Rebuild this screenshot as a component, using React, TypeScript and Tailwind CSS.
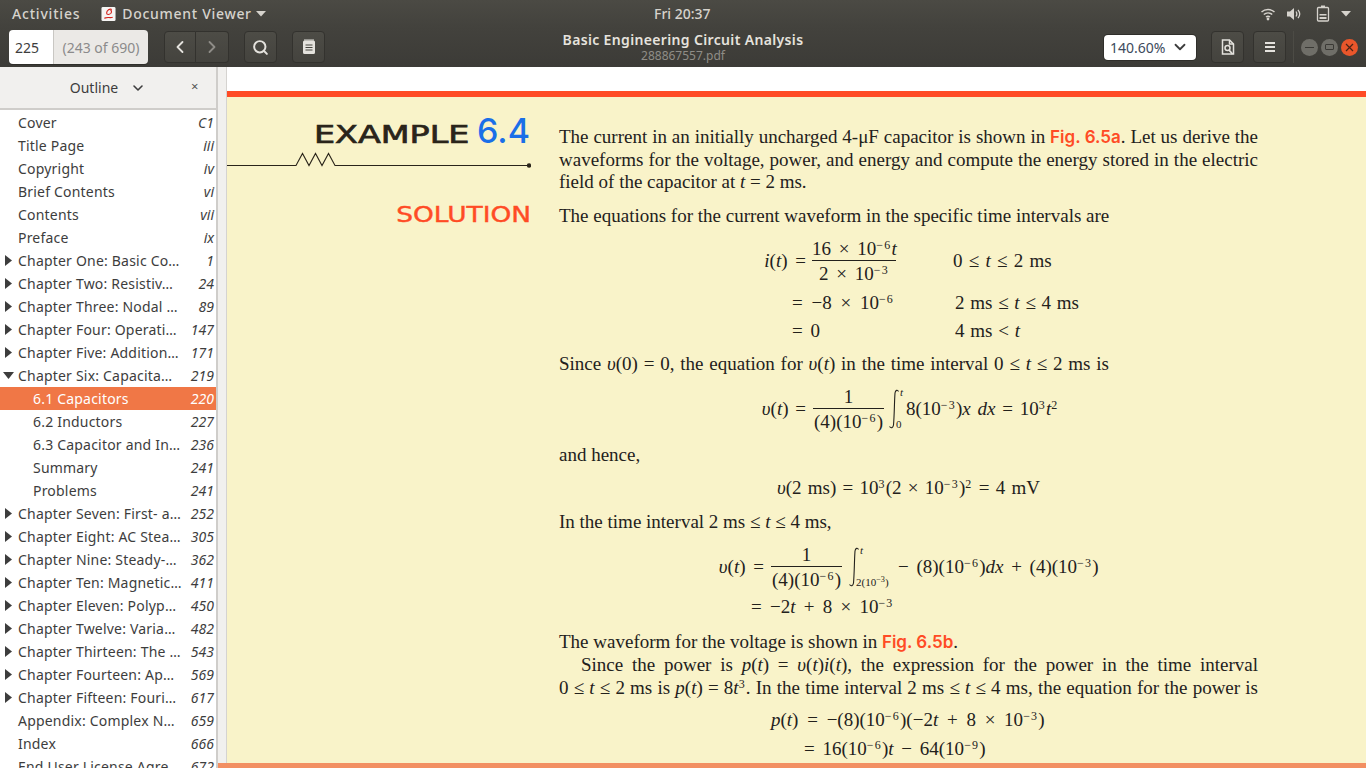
import { ChevronDown, ChevronLeft, ChevronRight, Search } from "lucide-react";
import type { ReactNode } from "react";

type OutlineEntry = {
  title: string;
  page: string;
  arrow?: "right" | "down";
  child?: boolean;
  active?: boolean;
};

const OUTLINE: OutlineEntry[] = [
  { title: "Cover", page: "C1" },
  { title: "Title Page", page: "iii" },
  { title: "Copyright", page: "iv" },
  { title: "Brief Contents", page: "vi" },
  { title: "Contents", page: "vii" },
  { title: "Preface", page: "ix" },
  { title: "Chapter One: Basic Co…", page: "1", arrow: "right" },
  { title: "Chapter Two: Resistiv…", page: "24", arrow: "right" },
  { title: "Chapter Three: Nodal …", page: "89", arrow: "right" },
  { title: "Chapter Four: Operati…", page: "147", arrow: "right" },
  { title: "Chapter Five: Addition…", page: "171", arrow: "right" },
  { title: "Chapter Six: Capacita…", page: "219", arrow: "down" },
  { title: "6.1 Capacitors", page: "220", child: true, active: true },
  { title: "6.2 Inductors", page: "227", child: true },
  { title: "6.3 Capacitor and In…", page: "236", child: true },
  { title: "Summary", page: "241", child: true },
  { title: "Problems", page: "241", child: true },
  { title: "Chapter Seven: First- a…", page: "252", arrow: "right" },
  { title: "Chapter Eight: AC Stea…", page: "305", arrow: "right" },
  { title: "Chapter Nine: Steady-…", page: "362", arrow: "right" },
  { title: "Chapter Ten: Magnetic…", page: "411", arrow: "right" },
  { title: "Chapter Eleven: Polyp…", page: "450", arrow: "right" },
  { title: "Chapter Twelve: Varia…", page: "482", arrow: "right" },
  { title: "Chapter Thirteen: The …", page: "543", arrow: "right" },
  { title: "Chapter Fourteen: Ap…", page: "569", arrow: "right" },
  { title: "Chapter Fifteen: Fouri…", page: "617", arrow: "right" },
  { title: "Appendix: Complex N…", page: "659" },
  { title: "Index", page: "666" },
  { title: "End User License Agre…", page: "672" },
];

function ToolButton({ children, className = "" }: { children: ReactNode; className?: string }) {
  return (
    <div
      className={`flex h-[32px] items-center justify-center rounded-[4px] border border-[#33322e] bg-gradient-to-b from-[#4d4c46] to-[#44433e] ${className}`}
    >
      {children}
    </div>
  );
}

function TopBar() {
  return (
    <div className="relative flex h-[27px] items-center bg-gradient-to-b from-[#4b4a44] to-[#43423d] text-[14px] font-medium text-[#d6d3cd]">
      <span className="ml-[12px] tracking-[0.8px]">Activities</span>
      <svg className="ml-[21px]" width="15" height="16" viewBox="0 0 16 16">
        <rect x="0.5" y="0.5" width="15" height="15" rx="1.5" fill="#f6f5f3" />
        <path d="M11.5 3.2c-2-1.4-5.5 1-5.5 3.8 0 2 3 2 4.6.2.9-1.2.7-3-.5-3.6M3.5 12.5c2-.5 3-1 4.5-.8 1.500.2 3 .4 4.500-.2" fill="none" stroke="#d5231c" strokeWidth="1.200" />
      </svg>
      <span className="ml-[6px] tracking-[0.7px]">Document Viewer</span>
      <svg className="ml-[4px]" width="10" height="6" viewBox="0 0 10 6">
        <path d="M0 0h10L5 5.500z" fill="#d6d3cd" />
      </svg>
      <span className="absolute left-[654px] top-[4px] text-[14px] leading-[19px]">Fri 20:37</span>
      <div className="ml-auto mr-[15px] flex items-center">
        <svg width="16" height="16" viewBox="0 0 16 16" fill="none" stroke="#d6d3cd" strokeWidth="1.500">
          <path d="M1.500 6c3.700-3.300 9.300-3.300 13 0M3.800 8.500c2.400-2 6-2 8.400 0M6 11c1.200-.9 2.800-.9 4 0" />
          <circle cx="8" cy="13" r="1.400" fill="#d6d3cd" stroke="none" />
        </svg>
        <svg className="ml-[10px]" width="16" height="16" viewBox="0 0 16 16" fill="none">
          <path d="M1 5.500h3L8 2v12l-4-3.500H1z" fill="#d6d3cd" />
          <path d="M10 5.500c1 1.500 1 3.500 0 5M12 3.800c2 2.500 2 6 0 8.400" stroke="#d6d3cd" strokeWidth="1.300" />
        </svg>
        <svg className="ml-[14px]" width="14" height="17" viewBox="0 0 14 17" fill="none">
          <path d="M5 .5h4v2H5z" fill="#d6d3cd" />
          <rect x="1.500" y="2.500" width="11" height="13.500" rx="1" stroke="#d6d3cd" strokeWidth="1.300" />
          <path d="M3.500 9h7v1.500h-7zM3.500 12h7v2h-7z" fill="#d6d3cd" />
        </svg>
        <svg className="ml-[11px]" width="10" height="6" viewBox="0 0 10 6">
          <path d="M0 0h10L5 5.500z" fill="#d6d3cd" />
        </svg>
      </div>
    </div>
  );
}

function HeaderBar() {
  return (
    <div className="relative flex h-[40px] items-center bg-gradient-to-b from-[#43423d] to-[#3c3b37] pl-[9px]">
      <div className="flex h-[34px] w-[139px] overflow-hidden rounded-[4px] text-[14px] shadow-[0_1px_0_#2f2e2a]">
        <div className="flex w-[44px] items-center bg-white pl-[6px] text-[#3d3d3d]">225</div>
        <div className="flex flex-1 items-center justify-center border-l border-[#c9c7c3] bg-[#ebe9e6] text-[#8b8b8b]">
          (243 of 690)
        </div>
      </div>
      <div className="ml-[16px] flex">
        <ToolButton className="w-[32px] rounded-r-none text-[#e4e2dd]">
          <ChevronLeft size={20} strokeWidth={2.200} />
        </ToolButton>
        <ToolButton className="w-[33px] rounded-l-none border-l-0 text-[#8f8d88]">
          <ChevronRight size={20} strokeWidth={2.200} />
        </ToolButton>
      </div>
      <ToolButton className="ml-[15px] w-[33px] text-[#e4e2dd]">
        <Search size={17} strokeWidth={2.800} />
      </ToolButton>
      <ToolButton className="ml-[15px] w-[33px]">
        <svg width="14" height="16" viewBox="0 0 14 16" fill="none">
          <path d="M2.500 1.500h9a1.500 1.500 0 0 1 1.500 1.500v10.500a1.500 1.500 0 0 1-1.500 1.500h-9A1.500 1.500 0 0 1 1 13.500V3a1.500 1.500 0 0 1 1.500-1.500z" fill="#e4e2dd" />
          <path d="M3 0v3M5 0v3M7 0v3M9 0v3M11 0v3" stroke="#e4e2dd" strokeWidth="1" />
          <path d="M3.500 6h7M3.500 8.500h7M3.500 11h7" stroke="#45443f" strokeWidth="1.200" />
        </svg>
      </ToolButton>

      <div className="absolute left-[483px] top-0 w-[400px] text-center">
        <div className="mt-[4px] text-[14px] font-semibold leading-[18px] tracking-[0.35px] text-[#e6e3de]">
          Basic Engineering Circuit Analysis
        </div>
        <div className="text-[12px] leading-[13px] text-[#8f8d87]">288867557.pdf</div>
      </div>

      <div className="ml-auto flex items-center">
        <div className="flex h-[25px] w-[92px] items-center rounded-[4px] bg-white pl-[6px] text-[14px] text-[#3d4a5c] shadow-[0_0_0_1px_#2f2e2a]">
          140.60%
          <ChevronDown className="ml-auto mr-[7px] text-[#3d3d3d]" size={18} strokeWidth={2.400} />
        </div>
        <ToolButton className="ml-[15px] w-[33px]">
          <svg width="14" height="16" viewBox="0 0 14 16" fill="none">
            <path d="M1.500 1h7l4 4v10h-11z" stroke="#e4e2dd" strokeWidth="1.500" />
            <path d="M8.500 1v4h4" stroke="#e4e2dd" strokeWidth="1.500" />
            <circle cx="6.500" cy="9" r="2.500" stroke="#e4e2dd" strokeWidth="1.500" />
            <path d="M8 11l3.500 4" stroke="#e4e2dd" strokeWidth="1.800" />
          </svg>
        </ToolButton>
        <ToolButton className="ml-[9px] w-[33px]">
          <svg width="12" height="12" viewBox="0 0 12 12" fill="#e4e2dd">
            <rect x="1" y="1" width="10" height="2" />
            <rect x="1" y="5" width="10" height="2" />
            <rect x="1" y="9" width="10" height="2" />
          </svg>
        </ToolButton>
        <div className="ml-[7px] h-[32px] w-px bg-[#4c4b45]" />
        <div className="ml-[7px] mr-[8px] flex items-center gap-[3px]">
          <div className="flex h-[17px] w-[17px] items-center justify-center rounded-full bg-[#6f6e68]">
            <div className="h-[1px] w-[9px] bg-[#3a3935]" />
          </div>
          <div className="flex h-[17px] w-[17px] items-center justify-center rounded-full bg-[#6f6e68]">
            <div className="h-[6px] w-[9px] rounded-[1px] border border-[#3a3935]" />
          </div>
          <div className="flex h-[17px] w-[17px] items-center justify-center rounded-full bg-[#e9562b] text-[#4a2315]">
            <svg width="9" height="9" viewBox="0 0 9 9" stroke="currentColor" strokeWidth="1.200">
              <path d="M1 1l7 7M8 1l-7 7" />
            </svg>
          </div>
        </div>
      </div>
    </div>
  );
}

function Sidebar() {
  return (
    <div className="flex h-full w-[218px] shrink-0 flex-col overflow-hidden border-r-2 border-[#cfcdca] bg-white">
      <div className="relative flex h-[43px] shrink-0 items-center justify-center border-b-2 border-[#cfcdca] bg-[#f1f0ee] text-[14px] text-[#3d3d3d]">
        <span className="mr-[1px]">Outline</span>
        <ChevronDown className="ml-[11px]" size={16} strokeWidth={2.400} />
        <span className="absolute left-[191px] top-[10px] text-[13px] leading-[18px] text-[#555]">×</span>
      </div>
      <div className="pt-[1px]">
        {OUTLINE.map((entry) => (
          <div
            key={entry.title}
            className={`relative flex h-[23px] items-center pr-[2px] text-[14px] ${
              entry.active ? "bg-[#f07746] text-white" : "text-[#3d3d3d]"
            } ${entry.child ? "pl-[33px]" : "pl-[18px]"}`}
          >
            {entry.arrow === "right" && (
              <svg className="absolute left-[5px] top-[6px]" width="7" height="11" viewBox="0 0 7 11">
                <path d="M0 0l7 5.500L0 11z" fill="#3d3d3d" />
              </svg>
            )}
            {entry.arrow === "down" && (
              <svg className="absolute left-[3px] top-[8px]" width="11" height="7" viewBox="0 0 11 7">
                <path d="M0 0h11L5.500 7z" fill="#3d3d3d" />
              </svg>
            )}
            <span className="whitespace-nowrap tracking-[0.2px]">{entry.title}</span>
            <span className="ml-auto italic">{entry.page}</span>
          </div>
        ))}
      </div>
    </div>
  );
}

function Line({ children, className = "" }: { children: ReactNode; className?: string }) {
  return <div className={`h-[23px] whitespace-nowrap leading-[21px] ${className}`}>{children}</div>;
}

function Sup({ children }: { children: ReactNode }) {
  return <sup className="text-[12px] tracking-[1.2px]">{children}</sup>;
}

function Fig({ children }: { children: ReactNode }) {
  return <span className="font-['Inter',sans-serif] text-[17px] font-semibold text-[#ff4b25]">{children}</span>;
}

function Frac({ top, bottom, className = "" }: { top: ReactNode; bottom: ReactNode; className?: string }) {
  return (
    <div className={`flex flex-col items-center ${className}`}>
      <div className="h-[24px] w-full whitespace-nowrap border-b border-[#23211c] text-center leading-[24px]">{top}</div>
      <div className="h-[25px] whitespace-nowrap leading-[25px]">{bottom}</div>
    </div>
  );
}

function Integral({ upper, lower, className = "" }: { upper: string; lower: ReactNode; className?: string }) {
  return (
    <div className={`relative h-[50px] ${className}`}>
      <svg className="absolute left-0 top-[5px]" width="12" height="40" viewBox="0 0 12 40" fill="none" stroke="#23211c">
        <path d="M10.500 2.500C9.500.5 7.500 1 7 4c-.7 10-.6 22-1.500 32-.4 3-2.500 3.500-4 1.500" strokeWidth="1.100" />
      </svg>
      <span className="absolute left-[12px] top-[1px] text-[11px] italic leading-[14px]">{upper}</span>
      <span className="absolute left-[8px] top-[33px] whitespace-nowrap text-[11px] leading-[14px]">{lower}</span>
    </div>
  );
}

function ExampleHeading() {
  return (
    <div className="w-[304px] shrink-0">
      <div className="mt-[15px] flex h-[38px] items-end justify-end pr-[1px]">
        <span className="inline-block origin-right scale-x-[1.335] font-['DejaVu_Sans',sans-serif] text-[25px] leading-[30px] text-[#2a241a] [-webkit-text-stroke:0.7px_#2a241a]">
          EXAMPLE
        </span>
        <span className="ml-[8px] font-['Inter',sans-serif] text-[34px] font-medium leading-[38px] text-[#1a6fe8]">
          6.4
        </span>
      </div>
      <svg className="block" width="304" height="20" viewBox="0 0 304 20" fill="none" stroke="#2a241a">
        <path d="M0 15.500H69l6.500-12 6.500 12 6.500-12 6.500 12 6.500-12 6.500 12H302" strokeWidth="1.100" />
        <circle cx="302" cy="15.500" r="2.200" fill="#2a241a" stroke="none" />
      </svg>
      <div className="mt-[32px] flex justify-end">
        <span className="inline-block origin-right scale-x-[1.260] font-['DejaVu_Sans',sans-serif] text-[21px] leading-[26px] text-[#ff4b25] [-webkit-text-stroke:0.4px_#ff4b25]">
          SOLUTION
        </span>
      </div>
    </div>
  );
}

function PageBody() {
  return (
    <div className="ml-[28px] w-[699px] pt-[29px] font-['Liberation_Serif',serif] text-[19px] text-[#23211c]">
      <Line className="[text-align-last:justify]">
        The current in an initially uncharged 4-μF capacitor is shown in <Fig>Fig. 6.5a</Fig>. Let us derive the
      </Line>
      <Line className="[text-align-last:justify]">
        waveforms for the voltage, power, and energy and compute the energy stored in the electric
      </Line>
      <Line className="-mt-[1px]">
        field of the capacitor at <i>t</i> = 2 ms.
      </Line>
      <Line className="mt-[11px]">The equations for the current waveform in the specific time intervals are</Line>

      <div className="mt-[8px] flex h-[50px] items-center [word-spacing:3px]">
        <div className="w-[247px] text-right">
          <i>i</i>(<i>t</i>) =
        </div>
        <Frac
          className="ml-[6px] w-[84px]"
          top={
            <>
              16 × 10<Sup>−6</Sup>
              <i>t</i>
            </>
          }
          bottom={
            <>
              2 × 10<Sup>−3</Sup>
            </>
          }
        />
        <div className="ml-[57px] [word-spacing:1.500px]">
          0 ≤ <i>t</i> ≤ 2 ms
        </div>
      </div>
      <div className="mt-[6px] flex h-[23px] items-center pl-[233px] [word-spacing:4px]">
        <div className="w-[163px]">
          = −8 × 10<Sup>−6</Sup>
        </div>
        <div className="[word-spacing:1px]">
          2 ms ≤ <i>t</i> ≤ 4 ms
        </div>
      </div>
      <div className="mt-[5px] flex h-[23px] items-center pl-[233px] [word-spacing:3px]">
        <div className="w-[163px]">= 0</div>
        <div className="[word-spacing:1px]">
          4 ms &lt; <i>t</i>
        </div>
      </div>

      <Line className="mt-[10px] w-[550px] [text-align-last:justify]">
        Since <i>υ</i>(0) = 0, the equation for <i>υ</i>(<i>t</i>) in the time interval 0 ≤ <i>t</i> ≤ 2 ms is
      </Line>

      <div className="mt-[8px] flex h-[50px] items-center [word-spacing:2px]">
        <div className="w-[247px] text-right">
          <i>υ</i>(<i>t</i>) =
        </div>
        <Frac
          className="ml-[7px] w-[71px]"
          top="1"
          bottom={
            <>
              (4)(10<Sup>−6</Sup>)
            </>
          }
        />
        <Integral className="ml-[4px] w-[18px]" upper="t" lower="0" />
        <div className="whitespace-nowrap">
          8(10<Sup>−3</Sup>)<i>x dx</i> = 10<Sup>3</Sup>
          <i>t</i>
          <Sup>2</Sup>
        </div>
      </div>

      <Line className="mt-[10px]">and hence,</Line>
      <Line className="ml-[218px] mt-[10px] w-[263px] [text-align-last:justify]">
        <i>υ</i>(2 ms) = 10<Sup>3</Sup>(2 × 10<Sup>−3</Sup>)<Sup>2</Sup> = 4 mV
      </Line>
      <Line className="mt-[11px]">
        In the time interval 2 ms ≤ <i>t</i> ≤ 4 ms,
      </Line>

      <div className="mt-[8px] flex h-[50px] items-center [word-spacing:3px]">
        <div className="w-[205px] text-right">
          <i>υ</i>(<i>t</i>) =
        </div>
        <Frac
          className="ml-[7px] w-[71px]"
          top="1"
          bottom={
            <>
              (4)(10<Sup>−6</Sup>)
            </>
          }
        />
        <Integral
          className="ml-[6px] w-[50px]"
          upper="t"
          lower={
            <>
              2(10<sup>−3</sup>)
            </>
          }
        />
        <div className="whitespace-nowrap">
          − (8)(10<Sup>−6</Sup>)<i>dx</i> + (4)(10<Sup>−3</Sup>)
        </div>
      </div>
      <Line className="ml-[192px] mt-[4px] [word-spacing:3.500px]">
        = −2<i>t</i> + 8 × 10<Sup>−3</Sup>
      </Line>

      <Line className="mt-[12px]">
        The waveform for the voltage is shown in <Fig>Fig. 6.5b</Fig>.
      </Line>
      <Line className="pl-[22px] [text-align-last:justify]">
        Since the power is <i>p</i>(<i>t</i>) = <i>υ</i>(<i>t</i>)<i>i</i>(<i>t</i>), the expression for the power in the time interval
      </Line>
      <Line className="[text-align-last:justify]">
        0 ≤ <i>t</i> ≤ 2 ms is <i>p</i>(<i>t</i>) = 8<i>t</i>
        <Sup>3</Sup>. In the time interval 2 ms ≤ <i>t</i> ≤ 4 ms, the equation for the power is
      </Line>
      <Line className="ml-[212px] mt-[9px] [word-spacing:4px]">
        <i>p</i>(<i>t</i>) = −(8)(10<Sup>−6</Sup>)(−2<i>t</i> + 8 × 10<Sup>−3</Sup>)
      </Line>
      <Line className="ml-[245px] mt-[6px] [word-spacing:3px]">
        = 16(10<Sup>−6</Sup>)<i>t</i> − 64(10<Sup>−9</Sup>)
      </Line>
    </div>
  );
}

export default function App() {
  return (
    <div className="relative flex h-[768px] w-[1366px] flex-col overflow-hidden font-['Noto_Sans',sans-serif]">
      <TopBar />
      <HeaderBar />
      <div className="flex min-h-0 flex-1">
        <Sidebar />
        <div className="w-[9px] shrink-0 border-r border-[#d5d3d0] bg-[#f1f0ee]" />
        <div className="flex min-w-0 flex-1 flex-col bg-white">
          <div className="mt-[24px] h-[6px] shrink-0 bg-[#ff4b25]" />
          <div className="flex flex-1 overflow-hidden bg-[#f9f3c9]">
            <ExampleHeading />
            <PageBody />
          </div>
        </div>
      </div>
      <div className="absolute bottom-0 left-[218px] h-[5px] w-[1148px] bg-[#f28f62]" />
    </div>
  );
}
